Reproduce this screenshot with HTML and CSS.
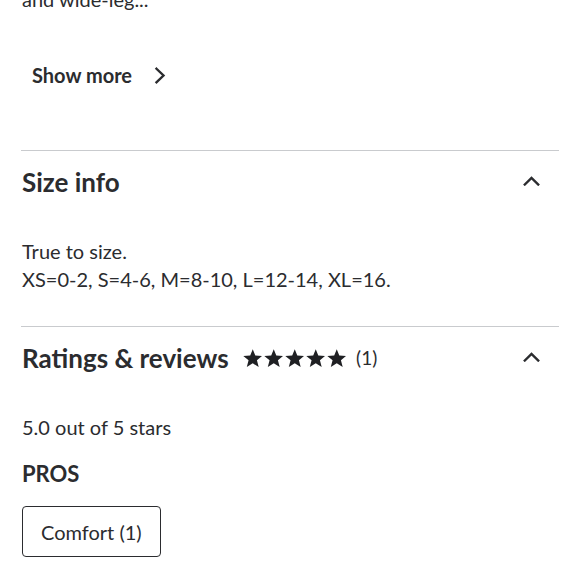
FILE: index.html
```html
<!DOCTYPE html>
<html lang="en">
<head>
<meta charset="utf-8">
<title>Product details</title>
<link rel="stylesheet" href="styles.css">
</head>
<body>
<main class="page">
  <p class="desc">and wide-leg...</p>
  <button class="show-more" type="button">
    <span>Show more</span>
    <svg class="chev-right" width="12" height="17" viewBox="0 0 12 17" aria-hidden="true"><path d="M2.5 1.8 L9.5 8.5 L2.5 15.2" fill="none" stroke="currentColor" stroke-width="2.4" stroke-linecap="square"/></svg>
  </button>

  <section class="panel">
    <header class="panel-head">
      <h2 class="panel-title">Size info</h2>
      <svg class="chev-up" width="17" height="10" viewBox="0 0 17 10" aria-hidden="true"><path d="M1.8 8.5 L8.5 2 L15.2 8.5" fill="none" stroke="currentColor" stroke-width="2.4" stroke-linecap="square"/></svg>
    </header>
    <div class="panel-body">
      <p class="body-text">True to size.<br>XS=0-2, S=4-6, M=8-10, L=12-14, XL=16.</p>
    </div>
  </section>

  <section class="panel">
    <header class="panel-head">
      <div class="title-row">
        <h2 class="panel-title">Ratings &amp; reviews</h2>
        <span class="stars" aria-label="5 out of 5 stars">
          <svg viewBox="0 0 20 19" class="star"><path d="M10 0.3 L12.6 6.6 L19.7 7.1 L14.3 11.5 L16.1 18.6 L10 14.7 L3.9 18.6 L5.7 11.5 L0.3 7.1 L7.4 6.6 Z"/></svg>
          <svg viewBox="0 0 20 19" class="star"><path d="M10 0.3 L12.6 6.6 L19.7 7.1 L14.3 11.5 L16.1 18.6 L10 14.7 L3.9 18.6 L5.7 11.5 L0.3 7.1 L7.4 6.6 Z"/></svg>
          <svg viewBox="0 0 20 19" class="star"><path d="M10 0.3 L12.6 6.6 L19.7 7.1 L14.3 11.5 L16.1 18.6 L10 14.7 L3.9 18.6 L5.7 11.5 L0.3 7.1 L7.4 6.6 Z"/></svg>
          <svg viewBox="0 0 20 19" class="star"><path d="M10 0.3 L12.6 6.6 L19.7 7.1 L14.3 11.5 L16.1 18.6 L10 14.7 L3.9 18.6 L5.7 11.5 L0.3 7.1 L7.4 6.6 Z"/></svg>
          <svg viewBox="0 0 20 19" class="star"><path d="M10 0.3 L12.6 6.6 L19.7 7.1 L14.3 11.5 L16.1 18.6 L10 14.7 L3.9 18.6 L5.7 11.5 L0.3 7.1 L7.4 6.6 Z"/></svg>
        </span>
        <span class="count">(1)</span>
      </div>
      <svg class="chev-up" width="17" height="10" viewBox="0 0 17 10" aria-hidden="true"><path d="M1.8 8.5 L8.5 2 L15.2 8.5" fill="none" stroke="currentColor" stroke-width="2.4" stroke-linecap="square"/></svg>
    </header>
    <div class="panel-body">
      <p class="body-text">5.0 out of 5 stars</p>
      <h3 class="pros-title">PROS</h3>
      <button class="chip" type="button">Comfort (1)</button>
    </div>
  </section>
</main>
</body>
</html>
```

FILE: styles.css
```css
* { box-sizing: border-box; }

html, body {
  margin: 0;
  padding: 0;
  background: #ffffff;
}

body {
  font-family: Lato, "Noto Sans", "Liberation Sans", sans-serif;
  color: #2b2c2f;
  overflow: hidden;
}

.page {
  padding: 0 22px 0 22px;
  width: 580px;
}

.desc {
  margin: -15px 0 0 0;
  font-size: 20px;
  line-height: 28px;
}

.show-more {
  display: inline-flex;
  align-items: center;
  gap: 22px;
  margin: 40px 0 0 0;
  padding: 8px 10px;
  border: 0;
  background: transparent;
  font-family: inherit;
  font-size: 20px;
  font-weight: 700;
  line-height: 28px;
  color: inherit;
}

.chev-right { display: block; margin-top: 1px; }

.panel {
  border-top: 1px solid #c9cbce;
  margin: 0 -1px 0 -1px;
  padding: 0 1px;
}

.show-more + .panel { margin-top: 53px; }

.panel-head {
  display: flex;
  align-items: center;
  justify-content: space-between;
  padding: 15px 18px 0 0;
}

.panel-title {
  margin: 0;
  font-size: 26px;
  line-height: 32px;
  font-weight: 700;
}

.chev-up { display: block; margin-top: -2px; }

.title-row {
  display: flex;
  align-items: center;
}

.stars {
  display: inline-flex;
  gap: 1.5px;
  margin-left: 14px;
  margin-top: 1px;
}

.star {
  width: 19.5px;
  height: 18.5px;
  fill: #1f2023;
  display: block;
}

.count {
  margin-left: 10px;
  font-size: 19px;
  line-height: 24px;
}

.panel-body {
  padding: 39px 0 33px 0;
}

.body-text {
  margin: 0;
  font-size: 20px;
  line-height: 28px;
}

.pros-title {
  margin: 19px 0 0 0;
  font-size: 22px;
  line-height: 28px;
  font-weight: 700;
}

.chip {
  display: inline-block;
  margin-top: 18px;
  padding: 11px 18px 10px;
  border: 1px solid #2b2c2f;
  border-radius: 4px;
  background: #fff;
  font-family: inherit;
  font-size: 20px;
  line-height: 28px;
  color: inherit;
}
```
